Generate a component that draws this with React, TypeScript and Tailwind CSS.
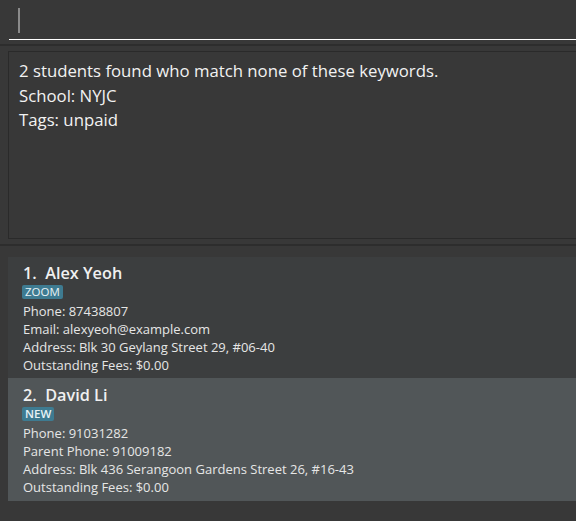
export default function App() {
  const font = { fontFamily: '"Open Sans", "Noto Sans", sans-serif' };
  return (
    <div className="w-[576px] h-[521px] bg-[#383838] overflow-hidden text-[#eeeeee]" style={font}>
      {/* command box */}
      <div className="h-[44px] pt-[8px] pl-[9px]">
        <div className="h-[32px] border-b border-white pl-[9px]">
          <div className="w-[2px] h-[25px] bg-[#8a8a8a]" />
        </div>
      </div>
      <div className="h-[2px] bg-[#2d2d2d]" />
      {/* result box */}
      <div className="pt-[5px] pl-[8px] h-[198px]">
        <div className="w-[600px] h-[188px] border border-[#2a2a2a] bg-[#383838] pl-[10px] pt-[7px] text-[16.75px] leading-[24.5px] text-[#f2f2f2]">
          <div>2 students found who match none of these keywords.</div>
          <div>School: NYJC</div>
          <div>Tags: unpaid</div>
        </div>
      </div>
      <div className="h-[2px] bg-[#2d2d2d]" />
      {/* list */}
      <div className="pt-[11px] pl-[8px] flex flex-col">
        <div className="bg-[#3c3e3f] h-[121px] pl-[15px] pt-[6px]">
          <div className="text-[16.25px] font-semibold leading-[20px] text-[#f0f0f0]">1.&nbsp;&nbsp;Alex Yeoh</div>
          <div className="flex mt-[1.5px]">
            <span className="bg-[#3e7b91] text-[#e8f2f5] text-[11.5px] leading-[14px] px-[3px] rounded-[2px] -ml-[1px]">ZOOM</span>
          </div>
          <div className="text-[13px] leading-[18px] mt-[3.5px] text-[#e6e6e6]">
            <div>Phone: 87438807</div>
            <div>Email: alexyeoh@example.com</div>
            <div>Address: Blk 30 Geylang Street 29, #06-40</div>
            <div>Outstanding Fees: $0.00</div>
          </div>
        </div>
        <div className="bg-[#515658] h-[123px] pl-[15px] pt-[7px]">
          <div className="text-[16.25px] font-semibold leading-[20px] text-[#f0f0f0]">2.&nbsp;&nbsp;David Li</div>
          <div className="flex mt-[1.5px]">
            <span className="bg-[#3e7b91] text-[#e8f2f5] text-[11.5px] leading-[14px] px-[3px] rounded-[2px] -ml-[1px] font-semibold">NEW</span>
          </div>
          <div className="text-[13px] leading-[18px] mt-[3.5px] text-[#e6e6e6]">
            <div>Phone: 91031282</div>
            <div>Parent Phone: 91009182</div>
            <div>Address: Blk 436 Serangoon Gardens Street 26, #16-43</div>
            <div>Outstanding Fees: $0.00</div>
          </div>
        </div>
      </div>
    </div>
  );
}
